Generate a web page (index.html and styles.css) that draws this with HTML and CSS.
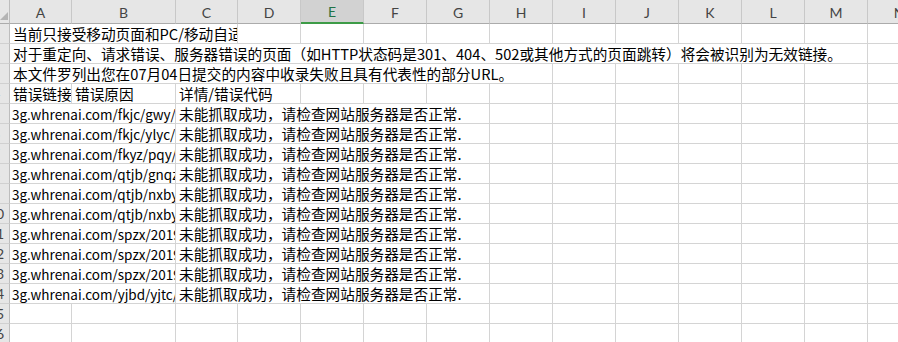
FILE: index.html
```html
<!DOCTYPE html>
<html lang="zh-CN">

<head>
    <meta charset="UTF-8">
    <meta name="viewport" content="width=device-width, initial-scale=1.0">
    <title>失效链接</title>
    <link rel="stylesheet" href="styles.css">
</head>

<body>
    <div class="sheet">
        <!-- 列标题 -->
        <div class="corner"></div>
        <div class="col-head">A</div>
        <div class="col-head">B</div>
        <div class="col-head">C</div>
        <div class="col-head">D</div>
        <div class="col-head on">E</div>
        <div class="col-head">F</div>
        <div class="col-head">G</div>
        <div class="col-head">H</div>
        <div class="col-head">I</div>
        <div class="col-head">J</div>
        <div class="col-head">K</div>
        <div class="col-head">L</div>
        <div class="col-head">M</div>
        <div class="col-head">N</div>

        <!-- 1 -->
        <div class="row-head"><span>1</span></div>
        <div class="cell span-3">当前只接受移动页面和PC/移动自适应页面的提交</div>
        <div class="cell"></div><div class="cell"></div><div class="cell"></div><div class="cell"></div><div class="cell"></div>
        <div class="cell"></div><div class="cell"></div><div class="cell"></div><div class="cell"></div><div class="cell"></div><div class="cell"></div>

        <!-- 2 -->
        <div class="row-head"><span>2</span></div>
        <div class="cell span-13">对于重定向、请求错误、服务器错误的页面（如HTTP状态码是301、404、502或其他方式的页面跳转）将会被识别为无效链接。</div>
        <div class="cell"></div>

        <!-- 3 -->
        <div class="row-head"><span>3</span></div>
        <div class="cell span-8">本文件罗列出您在07月04日提交的内容中收录失败且具有代表性的部分URL。</div>
        <div class="cell"></div><div class="cell"></div><div class="cell"></div><div class="cell"></div><div class="cell"></div><div class="cell"></div>

        <!-- 4 -->
        <div class="row-head"><span>4</span></div>
        <div class="cell">错误链接</div>
        <div class="cell">错误原因</div>
        <div class="cell span-2">详情/错误代码</div>
        <div class="cell"></div><div class="cell"></div><div class="cell"></div><div class="cell"></div><div class="cell"></div>
        <div class="cell"></div><div class="cell"></div><div class="cell"></div><div class="cell"></div><div class="cell"></div>

        <!-- 5 ~ 14 -->
        <div class="row-head"><span>5</span></div>
        <div class="cell url span-2">3g.whrenai.com/fkjc/gwy/20190612/1253.html</div>
        <div class="cell span-5">未能抓取成功，请检查网站服务器是否正常.</div>
        <div class="cell"></div><div class="cell"></div><div class="cell"></div><div class="cell"></div><div class="cell"></div><div class="cell"></div><div class="cell"></div>

        <div class="row-head"><span>6</span></div>
        <div class="cell url span-2">3g.whrenai.com/fkjc/ylyc/20190613/1267.html</div>
        <div class="cell span-5">未能抓取成功，请检查网站服务器是否正常.</div>
        <div class="cell"></div><div class="cell"></div><div class="cell"></div><div class="cell"></div><div class="cell"></div><div class="cell"></div><div class="cell"></div>

        <div class="row-head"><span>7</span></div>
        <div class="cell url span-2">3g.whrenai.com/fkyz/pqy/20190614/1281.html</div>
        <div class="cell span-5">未能抓取成功，请检查网站服务器是否正常.</div>
        <div class="cell"></div><div class="cell"></div><div class="cell"></div><div class="cell"></div><div class="cell"></div><div class="cell"></div><div class="cell"></div>

        <div class="row-head"><span>8</span></div>
        <div class="cell url span-2">3g.whrenai.com/qtjb/gnqz/20190615/1302.html</div>
        <div class="cell span-5">未能抓取成功，请检查网站服务器是否正常.</div>
        <div class="cell"></div><div class="cell"></div><div class="cell"></div><div class="cell"></div><div class="cell"></div><div class="cell"></div><div class="cell"></div>

        <div class="row-head"><span>9</span></div>
        <div class="cell url span-2">3g.whrenai.com/qtjb/nxby/20190616/1318.html</div>
        <div class="cell span-5">未能抓取成功，请检查网站服务器是否正常.</div>
        <div class="cell"></div><div class="cell"></div><div class="cell"></div><div class="cell"></div><div class="cell"></div><div class="cell"></div><div class="cell"></div>

        <div class="row-head"><span>10</span></div>
        <div class="cell url span-2">3g.whrenai.com/qtjb/nxby/20190617/1325.html</div>
        <div class="cell span-5">未能抓取成功，请检查网站服务器是否正常.</div>
        <div class="cell"></div><div class="cell"></div><div class="cell"></div><div class="cell"></div><div class="cell"></div><div class="cell"></div><div class="cell"></div>

        <div class="row-head"><span>11</span></div>
        <div class="cell url span-2">3g.whrenai.com/spzx/2019/0618/1340.html</div>
        <div class="cell span-5">未能抓取成功，请检查网站服务器是否正常.</div>
        <div class="cell"></div><div class="cell"></div><div class="cell"></div><div class="cell"></div><div class="cell"></div><div class="cell"></div><div class="cell"></div>

        <div class="row-head"><span>12</span></div>
        <div class="cell url span-2">3g.whrenai.com/spzx/2019/0619/1356.html</div>
        <div class="cell span-5">未能抓取成功，请检查网站服务器是否正常.</div>
        <div class="cell"></div><div class="cell"></div><div class="cell"></div><div class="cell"></div><div class="cell"></div><div class="cell"></div><div class="cell"></div>

        <div class="row-head"><span>13</span></div>
        <div class="cell url span-2">3g.whrenai.com/spzx/2019/0620/1371.html</div>
        <div class="cell span-5">未能抓取成功，请检查网站服务器是否正常.</div>
        <div class="cell"></div><div class="cell"></div><div class="cell"></div><div class="cell"></div><div class="cell"></div><div class="cell"></div><div class="cell"></div>

        <div class="row-head"><span>14</span></div>
        <div class="cell url span-2">3g.whrenai.com/yjbd/yjtc/20190621/1389.html</div>
        <div class="cell span-5">未能抓取成功，请检查网站服务器是否正常.</div>
        <div class="cell"></div><div class="cell"></div><div class="cell"></div><div class="cell"></div><div class="cell"></div><div class="cell"></div><div class="cell"></div>

        <!-- 空行 -->
        <div class="row-head"><span>15</span></div>
        <div class="cell"></div><div class="cell"></div><div class="cell"></div><div class="cell"></div><div class="cell"></div><div class="cell"></div><div class="cell"></div>
        <div class="cell"></div><div class="cell"></div><div class="cell"></div><div class="cell"></div><div class="cell"></div><div class="cell"></div><div class="cell"></div>

        <div class="row-head"><span>16</span></div>
        <div class="cell"></div><div class="cell"></div><div class="cell"></div><div class="cell"></div><div class="cell"></div><div class="cell"></div><div class="cell"></div>
        <div class="cell"></div><div class="cell"></div><div class="cell"></div><div class="cell"></div><div class="cell"></div><div class="cell"></div><div class="cell"></div>
    </div>
</body>

</html>
```

FILE: styles.css
```css
html,
body {
    margin: 0;
    padding: 0;
    background: #fff;
    overflow: hidden;
}

.sheet {
    display: grid;
    grid-template-columns: 10px 62px 104px 62px repeat(11, 63px);
    grid-template-rows: 24px;
    grid-auto-rows: 20px;
    font-family: "Noto Sans CJK SC", sans-serif;
    font-size: 14.67px;
    color: #000;
}

/* 左上角 */
.corner {
    position: relative;
    background: #e6e6e6;
    border-right: 1px solid #bdbdbd;
    border-bottom: 1px solid #ababab;
}

.corner::after {
    content: "";
    position: absolute;
    right: 1px;
    bottom: 3px;
    border-left: 8px solid transparent;
    border-bottom: 8px solid #b4b4b4;
}

/* 列标题 */
.col-head {
    box-sizing: border-box;
    display: flex;
    align-items: center;
    justify-content: center;
    background: #e6e6e6;
    border-right: 1px solid #c8c8c8;
    border-bottom: 1px solid #ababab;
    font-family: Lato, "Open Sans", sans-serif;
    font-size: 14px;
    color: #444;
    padding-top: 1px;
}

.col-head.on {
    background: #d2d2d2;
    border-bottom: 2px solid #3d9b47;
    color: #217346;
}

/* 行标题 */
.row-head {
    box-sizing: border-box;
    overflow: hidden;
    background: #e6e6e6;
    border-right: 1px solid #bdbdbd;
    border-bottom: 1px solid #d0d0d0;
    font-family: Lato, "Open Sans", sans-serif;
    font-size: 14px;
    color: #444;
    line-height: 19px;
}

.row-head span {
    display: block;
    width: 26px;
    margin-left: -17px;
    text-align: center;
}

/* 单元格 */
.cell {
    box-sizing: border-box;
    min-width: 0;
    overflow: hidden;
    white-space: nowrap;
    padding: 1px 0 0 3px;
    line-height: 18px;
    border-right: 1px solid #d4d4d4;
    border-bottom: 1px solid #d4d4d4;
}

/* 链接列的西文字更窄 */
.cell.url {
    font-size: 13.5px;
    padding-left: 2px;
}

.span-2 {
    grid-column: span 2;
}

.span-3 {
    grid-column: span 3;
}

.span-5 {
    grid-column: span 5;
}

.span-8 {
    grid-column: span 8;
}

.span-13 {
    grid-column: span 13;
}
```
